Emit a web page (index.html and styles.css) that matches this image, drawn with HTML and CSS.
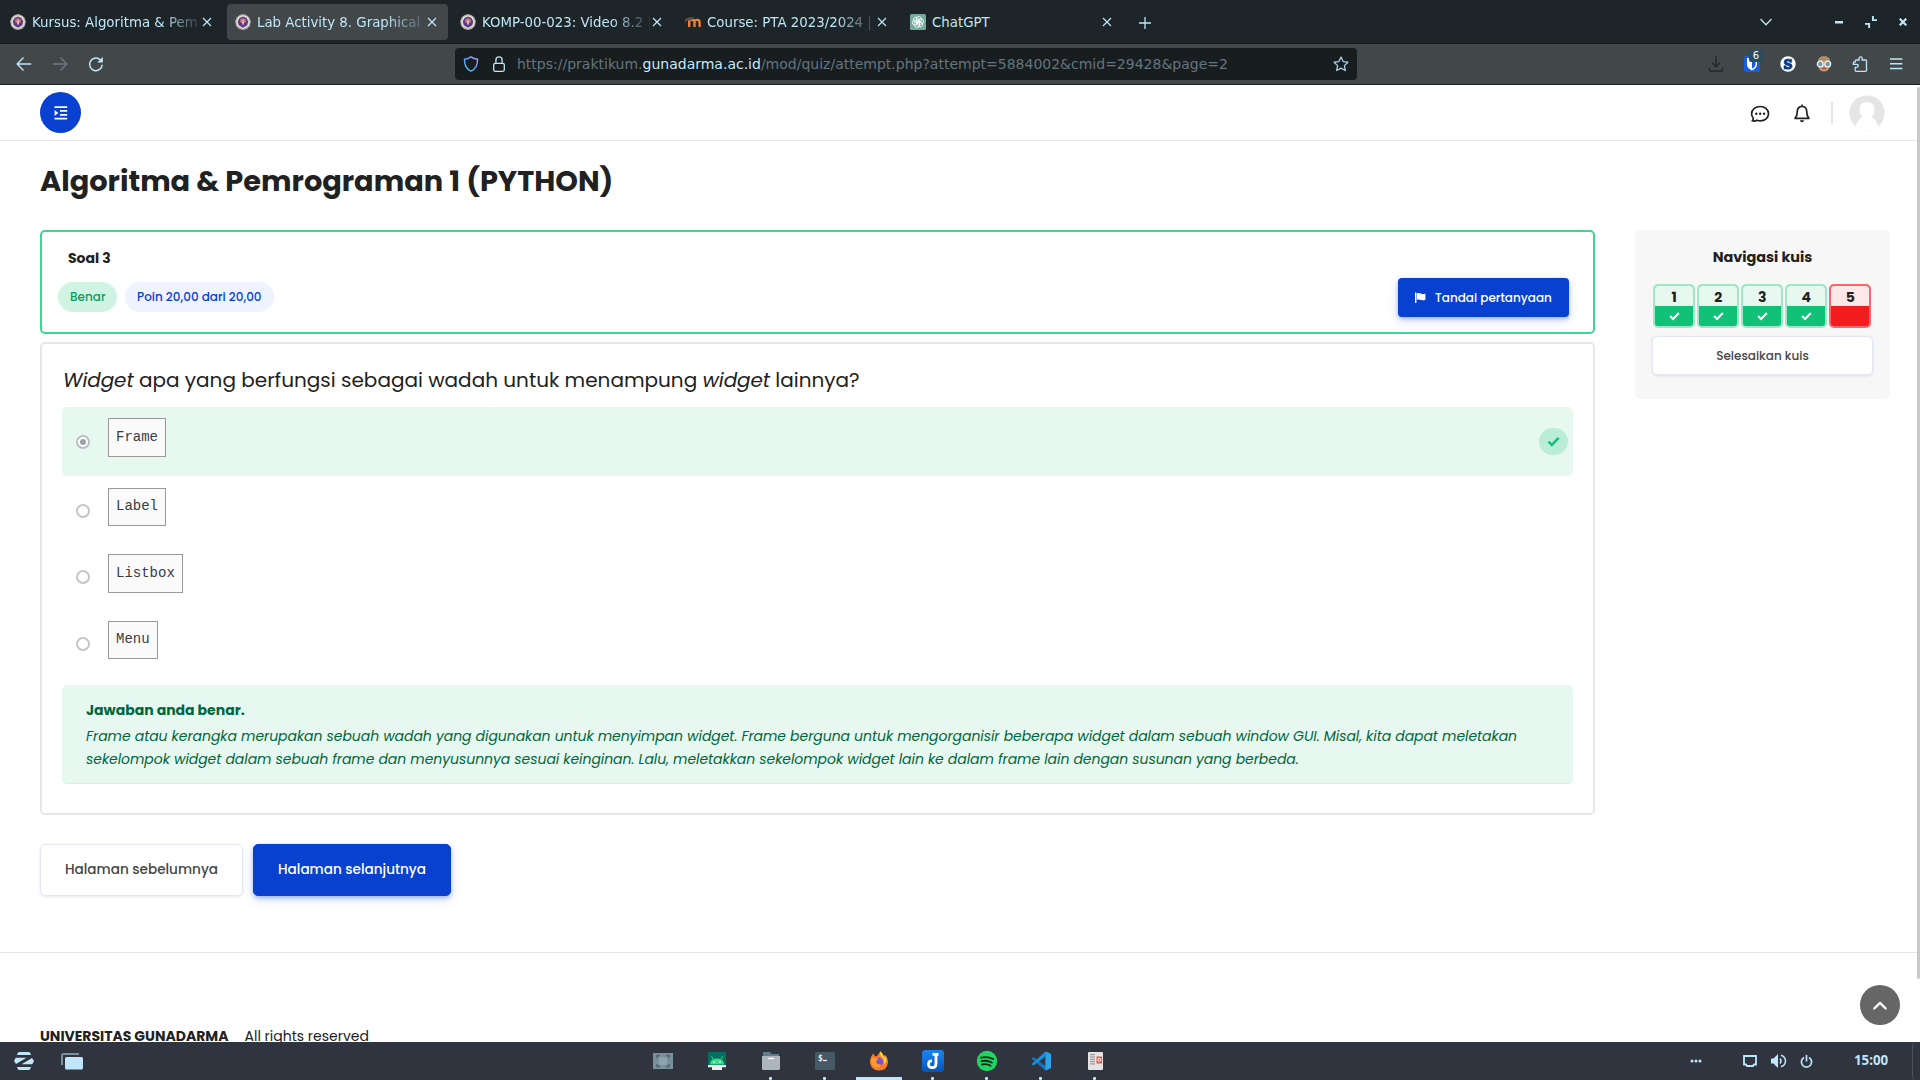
FILE: index.html
```html
<!DOCTYPE html>
<html lang="id">
<head>
<meta charset="utf-8">
<title>Lab Activity 8. Graphical User Interface</title>
<link rel="stylesheet" href="styles.css">
</head>
<body>
<svg width="0" height="0" class="defs">
  <defs>
    <symbol id="crest" viewBox="0 0 16 16">
      <path d="M8 .1l3.400 1 3 2.300 1.400 3.900-.8 4.400-3 3.200L8 16l-4-1.100-3-3.200-.8-4.400 1.400-3.900 3-2.300z" fill="#b5aea8"/>
      <path d="M8 1.200l4.600 1.600 2.200 4.700-1.200 4.600L8 14.900l-5.600-2.800-1.200-4.600 2.200-4.700z" fill="#e4dfd8"/>
      <path d="M8 2.600l3.500 1.300 1.700 3.600-1 3.700L8 13.700l-4.200-2.500-1-3.700 1.700-3.600z" fill="#57398a"/>
      <path d="M8 3.200l1.200 2 1.900-.5-.7 2.200 1.200 1.200-2.500.7L8 11.500 6.900 8.800l-2.500-.7 1.200-1.200-.7-2.200 1.900.5z" fill="#d9776c"/>
      <path d="M7.600 6.500h.9v4h-.9z" fill="#fff"/>
    </symbol>
    <symbol id="x" viewBox="0 0 10 10"><path d="M1 1l8 8M9 1L1 9" stroke="#bfe6f7" stroke-width="1.200" fill="none"/></symbol>
    <symbol id="check" viewBox="0 0 12 10"><path d="M1.300 5.100L4.500 8.200 10.700 1.700" stroke="currentColor" stroke-width="2.300" fill="none"/></symbol>
  </defs>
</svg>

<div class="tabs">
  <div class="tab"><svg class="fav"><use href="#crest"/></svg><span class="label fade">Kursus: Algoritma &amp; Pem</span><svg class="x"><use href="#x"/></svg></div>
  <div class="tab active"><svg class="fav"><use href="#crest"/></svg><span class="label fade">Lab Activity 8. Graphical</span><svg class="x"><use href="#x"/></svg></div>
  <div class="tab"><svg class="fav"><use href="#crest"/></svg><span class="label fade">KOMP-00-023: Video 8.2 |</span><svg class="x"><use href="#x"/></svg></div>
  <div class="tab">
    <svg class="fav" viewBox="0 0 16 16"><path d="M4.200 13V6.500M9.500 13V8q0-2.200 2.500-2.200T14.600 8v5M4.200 8q.2-2.200 2.700-2.200T9.500 8" stroke="#f18233" stroke-width="2.300" fill="none"/><path d="M0 5l5.500-2 4 .8-3 2.400L2 6.400.6 9z" fill="#55514e"/></svg>
    <span class="label fade">Course: PTA 2023/2024 |</span><svg class="x"><use href="#x"/></svg></div>
  <div class="tab">
    <svg class="fav" viewBox="0 0 16 16"><rect width="16" height="16" rx="1.500" fill="#75a99c"/><g fill="none" stroke="#fff" stroke-width=".8"><rect x="6.500" y="2.500" width="4.800" height="6.500" rx="2.300"/><rect x="6.500" y="2.500" width="4.800" height="6.500" rx="2.300" transform="rotate(60 8 8)"/><rect x="6.500" y="2.500" width="4.800" height="6.500" rx="2.300" transform="rotate(120 8 8)"/><rect x="6.500" y="2.500" width="4.800" height="6.500" rx="2.300" transform="rotate(180 8 8)"/><rect x="6.500" y="2.500" width="4.800" height="6.500" rx="2.300" transform="rotate(240 8 8)"/><rect x="6.500" y="2.500" width="4.800" height="6.500" rx="2.300" transform="rotate(300 8 8)"/></g></svg>
    <span class="label">ChatGPT</span><svg class="x"><use href="#x"/></svg></div>
  <svg class="plus" viewBox="0 0 12 12"><path d="M6 0v12M0 6h12" stroke="#bfe6f7" stroke-width="1.300"/></svg>
  <div class="wm">
    <svg width="12" height="8" viewBox="0 0 12 8"><path d="M.5 1L6 6.800 11.500 1" stroke="#bfe6f7" stroke-width="1.300" fill="none"/></svg>
    <svg class="min" width="8" height="3"><path d="M0 0h8v2.500H0z" fill="#bfe6f7"/></svg>
    <svg class="restore" width="12" height="12" viewBox="0 0 12 12"><path d="M7.900 0v4.100H12M0 7.900h4.100V12" stroke="#bfe6f7" stroke-width="1.900" fill="none"/></svg>
    <svg class="close" width="8" height="8" viewBox="0 0 8 8"><path d="M.7.700l6.600 6.600M7.300.7L.7 7.300" stroke="#bfe6f7" stroke-width="2.200"/></svg>
  </div>
</div>

<div class="toolbar">
  <div class="navbtns">
    <svg viewBox="0 0 16 16"><path d="M15.300 8H1.300M7.500 1.600L1.200 8l6.300 6.400" stroke="#bfe6f7" stroke-width="1.400" fill="none"/></svg>
    <svg viewBox="0 0 16 16"><path d="M.7 8h14M8.500 1.600L14.800 8l-6.300 6.400" stroke="#6d7a81" stroke-width="1.400" fill="none"/></svg>
    <svg viewBox="0 0 16 16"><path d="M14.200 8.700A6.300 6.300 0 1 1 11.700 3.300l2 2" stroke="#bfe6f7" stroke-width="1.500" fill="none"/><path d="M14.900.8v5.700H9.200z" fill="#bfe6f7"/></svg>
  </div>
  <div class="url">
    <svg class="shield" viewBox="0 0 16 16"><defs><linearGradient id="sg" x1="1" y1="0" x2="0" y2="1"><stop offset="0" stop-color="#b79bff"/><stop offset=".5" stop-color="#5b9bff"/><stop offset="1" stop-color="#2fe0e8"/></linearGradient></defs><path d="M8 .9C10 2.300 12 3 14.500 3.200c.3 5.300-1.600 9.600-6.500 12C3.100 12.800 1.200 8.500 1.500 3.200 4 3 6 2.300 8 .9z" fill="none" stroke="url(#sg)" stroke-width="1.400"/></svg>
    <svg class="lock" viewBox="0 0 14 16"><rect x="1.700" y="7.300" width="10.600" height="8" rx="1.500" fill="none" stroke="#bfe6f7" stroke-width="1.300"/><path d="M3.900 7V4a3.100 3.100 0 0 1 6.200 0v3" fill="none" stroke="#bfe6f7" stroke-width="1.300"/></svg>
    <span class="addr">https://praktikum.<b>gunadarma.ac.id</b>/mod/quiz/attempt.php?attempt=5884002&amp;cmid=29428&amp;page=2</span>
    <svg class="star" viewBox="0 0 16 16"><path d="M8 1.100l2.100 4.500 4.800.6-3.500 3.400.9 4.900L8 12.100l-4.300 2.400.9-4.900L1.100 6.200l4.800-.6z" fill="none" stroke="#a6d1e6" stroke-width="1.300" stroke-linejoin="round"/></svg>
  </div>
  <div class="ext">
    <svg viewBox="0 0 16 16"><path d="M8 0v10.500M3.800 6.500L8 10.700l4.200-4.200M1.500 11.500v2.700q0 .8.800.8h11.400q.8 0 .8-.8v-2.700" fill="none" stroke="#24292c" stroke-width="1.400"/></svg>
    <span class="bw"><svg viewBox="0 0 16 16"><rect width="16" height="16" rx="1.800" fill="#175ddc"/><path d="M3 2h10v6.500q0 3.500-5 6-5-2.500-5-6z" fill="#fff"/><path d="M8 3.500h3.600v5q0 2.200-3.600 4.200z" fill="#175ddc"/></svg><i>6</i></span>
    <svg viewBox="0 0 16 16"><circle cx="8" cy="8" r="7.700" fill="#fff"/><path d="M11.700 3.700v2.600H9.800Q9.500 4.900 8 4.900q-1.300 0-1.300 1 0 .8 1.800 1.100 3.700.6 3.700 3.100 0 3.100-4.200 3.100-1.300 0-2.200-.5v.3H4V9.800h1.900q.4 1.800 2.200 1.800 1.400 0 1.400-1 0-.8-1.900-1.200-3.500-.6-3.500-3.200Q4.100 3 7.700 3q1.100 0 2.100.5v-.3h1.900z" fill="#0a3a8c" stroke="#0a3a8c" stroke-width=".6"/></svg>
    <svg viewBox="0 0 16 16"><path d="M2 6q0-5.500 6-5.500T14 6v4q-1 5.500-6 5.500T2 10z" fill="#c98d6b"/><path d="M1.800 6Q2 .3 8 .3T14.200 6Q11 3.500 8 3.500T1.800 6z" fill="#a98f6b"/><circle cx="4.300" cy="8" r="2.900" fill="#6d9aa8" stroke="#e8eff0" stroke-width="1.400"/><circle cx="11.700" cy="8" r="2.900" fill="#6d9aa8" stroke="#e8eff0" stroke-width="1.400"/><path d="M6 12.700q2-1.200 4 0" stroke="#8d4c3b" fill="none"/></svg>
    <svg viewBox="0 0 16 16"><path d="M7 4V2.600q0-1.700 1.600-1.700t1.600 1.700V4h3.300q1 0 1 1v9.300q0 1-1 1H4.200q-1 0-1-1v-3h1.600q1.500 0 1.500-1.500T4.800 8.300H1.300V7.200Q1.300 6 2.600 6h.6V5q0-1 1-1z" fill="none" stroke="#bfe6f7" stroke-width="1.300"/></svg>
    <svg viewBox="0 0 16 16"><path d="M2 3h12.400M2 7.700h12.400M2 12.500h12.400" stroke="#bfe6f7" stroke-width="1.400"/></svg>
  </div>
</div>

<div class="page">
  <header class="top">
    <div class="menu"><svg width="14" height="14" viewBox="0 0 14 14"><path d="M.5 1.100h12.700M6 4.900h7.200M6 8.800h7.200M.5 12.600h12.700" stroke="#fff" stroke-width="1.700"/><path d="M.6 3.900v6L4.300 6.900z" fill="#fff"/></svg></div>
    <div class="user">
      <svg class="msg" width="20" height="18" viewBox="0 0 20 18"><path d="M2.200 15.800c.9-.8 1.200-1.700 1.100-2.800C2.200 11.900 1.600 10.400 1.600 8.700 1.600 4.600 5.300 1.500 10.200 1.500s8.300 3.100 8.300 7.200-3.500 7.100-8.300 7.100c-1.200 0-2.300-.2-3.200-.6-1.500.9-3 1.200-4.800.6z" fill="none" stroke="#212121" stroke-width="1.700" stroke-linejoin="round"/><g fill="#212121"><circle cx="6.300" cy="8.700" r="1.200"/><circle cx="10.200" cy="8.700" r="1.200"/><circle cx="14.100" cy="8.700" r="1.200"/></g></svg>
      <svg class="bell" width="16" height="19" viewBox="0 0 16 19"><path d="M8 2.500c-3 0-4.700 2.200-4.700 5 0 3.700-.8 5.200-2.200 6.800h13.800c-1.400-1.600-2.200-3.100-2.200-6.800 0-2.800-1.700-5-4.700-5z" fill="none" stroke="#212121" stroke-width="1.700" stroke-linejoin="round"/><path d="M7.200.5h1.600v2H7.200zM5.800 16.300h4.400q-.4 1.900-2.200 1.900t-2.200-1.900z" fill="#212121"/></svg>
      <span class="sep"></span>
      <svg class="avatar" width="36" height="36" viewBox="0 0 36 36"><defs><clipPath id="av"><circle cx="18" cy="18" r="17.600"/></clipPath></defs><g clip-path="url(#av)"><path d="M0 0h36v36H0z" fill="#e5e5e5"/><path d="M5 36C7 28.500 9.500 24 13.500 22q-3-3-3-7.500Q10.500 7 18 7t7.500 7.500q0 4.500-3 7.500c4 2 6.500 6.500 8.500 14z" fill="#fff"/></g></svg>
    </div>
  </header>

  <h1>Algoritma &amp; Pemrograman 1 (PYTHON)</h1>

  <div class="cols">
    <main>
      <section class="info">
        <h2>Soal 3</h2>
        <div class="inforow">
          <span class="pill ok">Benar</span><span class="pill pts">Poin 20,00 dari 20,00</span>
          <span class="flagbtn"><svg width="11" height="11" viewBox="0 0 11 11"><path d="M0 .4h1.400V11H0z" fill="#fff"/><path d="M1.800 1.300Q4 .5 5.900 1.500T10.400 1.500V7.800Q8 8.800 6 7.900T1.800 7.800z" fill="#fff"/></svg><span>Tandai pertanyaan</span></span>
        </div>
      </section>

      <section class="question">
        <p class="qtext"><em>Widget</em> apa yang berfungsi sebagai wadah untuk menampung <em>widget</em> lainnya?</p>
        <div class="ans correct"><span class="radio on"></span><code>Frame</code><span class="tick"><svg width="13" height="11"><use href="#check"/></svg></span></div>
        <div class="ans"><span class="radio"></span><code>Label</code></div>
        <div class="ans mid"><span class="radio"></span><code>Listbox</code></div>
        <div class="ans"><span class="radio"></span><code>Menu</code></div>
        <div class="feedback">
          <strong>Jawaban anda benar.</strong>
          <p>Frame atau kerangka merupakan sebuah wadah yang digunakan untuk menyimpan widget. Frame berguna untuk mengorganisir beberapa widget dalam sebuah window GUI. Misal, kita dapat meletakan sekelompok widget dalam sebuah frame dan menyusunnya sesuai keinginan. Lalu, meletakkan sekelompok widget lain ke dalam frame lain dengan susunan yang berbeda.</p>
        </div>
      </section>
      <div class="pager"><span class="btn prev">Halaman sebelumnya</span><span class="btn next">Halaman selanjutnya</span></div>
    </main>
    <aside>
      <h3>Navigasi kuis</h3>
      <div class="grid">
        <div class="q"><b>1</b><span><svg width="11" height="10"><use href="#check"/></svg></span></div>
        <div class="q"><b>2</b><span><svg width="11" height="10"><use href="#check"/></svg></span></div>
        <div class="q"><b>3</b><span><svg width="11" height="10"><use href="#check"/></svg></span></div>
        <div class="q"><b>4</b><span><svg width="11" height="10"><use href="#check"/></svg></span></div>
        <div class="q bad"><b>5</b><span></span></div>
      </div>
      <div class="finish">Selesaikan kuis</div>
    </aside>
  </div>
  <footer><b>UNIVERSITAS GUNADARMA</b><span>All rights reserved</span></footer>
  <div class="scroll"></div>
  <div class="totop"><svg width="14" height="9" viewBox="0 0 14 9"><path d="M1.300 7.500L7 1.900l5.700 5.600" stroke="#fff" stroke-width="2.300" fill="none" stroke-linecap="round" stroke-linejoin="round"/></svg></div>
</div>

<div class="taskbar">
  <div class="left">
    <svg width="20" height="18" viewBox="0 0 20 18" fill="#bfe6fb"><path d="M4.500 0h11l1.700 3H2.800zM2.800 15h14.400l-1.700 3h-11zM1.700 5.800h10.800L2 11.900 0 9zM18 6.100L20 9l-1.700 3.200H7.500z"/></svg>
    <svg width="22" height="17" viewBox="0 0 22 17"><path d="M1 12V2.500Q1 1 2.500 1H18" fill="none" stroke="#77919f" stroke-width="2"/><rect x="4" y="4" width="18" height="12.500" rx="1.500" fill="#bfe6fb"/></svg>
  </div>
  <div class="apps">
    <div class="app"><svg viewBox="0 0 22 22"><rect x="1" y="3" width="20" height="16" fill="#78909c"/><path d="M5 8V5.500h3M14 5.500h3V8M17 14v2.500h-3M8 16.500H5V14" stroke="#4f6570" stroke-width="1.500" fill="none"/><rect x="7" y="7" width="8" height="8" rx="2" fill="#8ea3ae"/></svg></div>
    <div class="app"><svg viewBox="0 0 22 22"><path d="M2 2h18v13H2z" fill="#056f62"/><path d="M4 14.500q0-6 7-6t7 6z" fill="#3ddc84"/><path d="M7 9L5.500 6.500M15 9l1.500-2.500" stroke="#3ddc84"/><circle cx="8" cy="12" r=".8" fill="#fff"/><circle cx="14" cy="12" r=".8" fill="#fff"/><path d="M2 15h18v2.300h-4V20H6v-2.700H2z" fill="#eee"/></svg></div>
    <div class="app run"><svg viewBox="0 0 22 22"><path d="M3 2h7l1.500 2H19v5H3z" fill="#607d8b"/><path d="M2 6h18v12.500q0 1.500-1.500 1.500h-15Q2 20 2 18.500z" fill="#adb6bb"/><path d="M8 8.500h6" stroke="#fff" stroke-width="1.300"/></svg></div>
    <div class="app run"><svg viewBox="0 0 22 22"><rect x="1" y="2" width="20" height="18" rx="1" fill="#455a64"/><text x="4" y="11" class="term">$</text><path d="M9 10.500h4" stroke="#e6ecef" stroke-width="1.300"/></svg></div>
    <div class="app act"><svg viewBox="0 0 22 22"><path d="M2 12Q2 7 5.500 3.500L7 6.500 9 6Q11 4 12 1.500 14.500 3.500 15 6l2-1q3 3 3 7.500Q19 20.500 11 20.500T2 12z" fill="#ff7a2a"/><path d="M12.500 1Q11 5 14 7.500T16 14q3.500-2 2-8-1 1-1.500 2Q15 3.500 12.500 1z" fill="#ffd43c"/><circle cx="11" cy="12" r="4.200" fill="#8054c8"/><path d="M4 8q4-1 6.500 1.300L8 11q.5 4 5.500 3.500-3 4.500-7.500 2T4 8z" fill="#ff9a2e"/></svg></div>
    <div class="app run"><svg viewBox="0 0 22 22"><defs><linearGradient id="jg" x1="0" y1="0" x2="0" y2="1"><stop offset="0" stop-color="#1b85f5"/><stop offset="1" stop-color="#0654b8"/></linearGradient></defs><rect width="22" height="22" rx="3.500" fill="url(#jg)"/><path d="M10.500 4.300h6M14 4.300v9.200q0 4.200-3.800 4.200T6.500 14.200t3.400-3.400" fill="none" stroke="#fff" stroke-width="2.800"/></svg></div>
    <div class="app run"><svg viewBox="0 0 22 22"><circle cx="11" cy="11" r="10.200" fill="#1fd45f"/><path d="M5 7.700q6.500-1.700 12.200 1.300M5.500 11.200q5.500-1.300 10.300 1.300M6 14.500q4.700-1 8.600 1.200" fill="none" stroke="#15241b" stroke-width="1.800" stroke-linecap="round"/></svg></div>
    <div class="app run"><svg viewBox="0 0 22 22"><path d="M15.500 1.500L21 4v14l-5.500 2.500L1.500 8.500 3.500 7 15.500 16z" fill="#1178bd"/><path d="M15.500 1.500L21 4v14l-5.500 2.500z" fill="#2ba3ea"/><path d="M15.500 6.500L3.500 15.500 1.500 14 15.500 1.500z" fill="#1c8fd6"/></svg></div>
    <div class="app run"><svg viewBox="0 0 22 22"><rect x="4" y="2" width="15" height="18" rx="1" fill="#e4e4e4"/><path d="M6 4.700h5M6 7h5M6 9.300h5M6 11.600h5M6 13.900h5" stroke="#8a8a8a"/><path d="M12.500 6.500H18v7h-5.500z" fill="#f05545"/><path d="M14 8.500h2.500v2.500H14z" fill="none" stroke="#fff" stroke-width=".8"/></svg></div>
  </div>
  <div class="tray">
    <svg class="dots" width="12" height="4"><g fill="#bfe6fb"><circle cx="2" cy="2" r="1.500"/><circle cx="6" cy="2" r="1.500"/><circle cx="10" cy="2" r="1.500"/></g></svg>
    <svg class="mon" width="14" height="12" viewBox="0 0 14 12"><path d="M1 1h12v8.500h-2l-1 1.500H4L3 9.500H1z" fill="none" stroke="#bfe6fb" stroke-width="1.800"/></svg>
    <svg class="vol" width="16" height="14" viewBox="0 0 16 14"><path d="M0 4.500h2.500L7 0v14L2.500 9.500H0z" fill="#bfe6fb"/><path d="M9 4.500q2 2.500 0 5M10 1.200q4.500 1.500 4.500 5.800T10 12.800" fill="none" stroke="#bfe6fb" stroke-width="1.500"/></svg>
    <svg class="pow" width="13" height="13" viewBox="0 0 13 13"><path d="M4 2.500a5.100 5.100 0 1 0 5 0M6.500 0v6.500" fill="none" stroke="#bfe6fb" stroke-width="1.700"/></svg>
    <span class="clock">15:00</span>
    <span class="edge"></span>
  </div>
</div>
</body>
</html>
```
FILE: styles.css
```css
* { box-sizing: border-box; }
body { margin: 0; width: 1920px; height: 1080px; overflow: hidden; display: flex; flex-direction: column; background: #fff; color: #212121; font-family: Poppins, Inter, sans-serif; }
h1, h2, h3, p { margin: 0; }
svg { display: block; flex: none; }
.defs { position: absolute; }

/* Browser tabs */
.tabs { flex: none; height: 44px; padding: 4px 0 0 2px; background: #1e2528; border-bottom: 1px solid #14191b; display: flex; align-items: flex-start; font: 13.33px "DejaVu Sans", sans-serif; color: #bfe6f7; }
.tab { width: 221px; height: 36px; margin-right: 4px; padding: 0 11px 0 8px; display: flex; align-items: center; border-radius: 4px; }
.tab.active { background: #42474a; }
.fav { width: 16px; height: 16px; margin-right: 6px; }
.label { width: 168px; white-space: nowrap; line-height: 20px; padding-top: 1px; }
.fade { -webkit-mask-image: linear-gradient(to right, #000 128px, transparent 172px); mask-image: linear-gradient(to right, #000 128px, transparent 172px); }
.x { width: 10px; height: 10px; margin-left: auto; }
.plus { width: 12px; height: 12px; margin: 13px 0 0 12px; }
.wm { margin: 0 13px 0 auto; height: 36px; display: flex; align-items: center; }
.min { margin-left: 63px; }
.restore { margin-left: 22px; }
.close { margin-left: 22px; }

/* Browser toolbar */
.toolbar { flex: none; height: 41px; background: #42474a; border-bottom: 1px solid #1b2023; display: flex; align-items: center; }
.navbtns { width: 455px; padding-left: 16px; display: flex; gap: 20px; }
.navbtns svg { width: 16px; height: 16px; }
.url { width: 902px; height: 32px; background: #181d20; border-radius: 4px; display: flex; align-items: center; padding: 0 8px; }
.shield, .star { width: 16px; height: 16px; }
.lock { width: 14px; height: 16px; margin: 0 11px 0 13px; }
.addr { font: 14px "DejaVu Sans", sans-serif; color: #64757d; white-space: nowrap; }
.addr b { font-weight: 400; color: #c5e9f9; }
.star { margin-left: auto; }
.ext { margin-left: auto; padding-right: 16px; display: flex; gap: 20px; }
.ext svg { width: 16px; height: 16px; }
.bw { position: relative; }
.bw i { position: absolute; left: 5px; top: -6px; width: 14px; height: 12px; border-radius: 2px; background: #2a4c5d; color: #fff; font: 10px/12px "DejaVu Sans", sans-serif; text-align: center; }

/* Page */
.page { position: relative; height: 957px; overflow: hidden; }
.top { height: 56px; padding: 0 35px 0 40px; display: flex; align-items: center; justify-content: space-between; border-bottom: 1px solid #e6e6e6; }
.menu { width: 41px; height: 41px; border-radius: 50%; background: #0841cf; display: grid; place-items: center; }
.user { display: flex; align-items: center; }
.msg { margin-top: 2px; }
.bell { margin: 2px 0 0 24px; }
.sep { width: 2px; height: 22px; margin: 0 16px 0 21px; background: #e6e6e6; }
h1 { padding: 21px 0 0 40px; height: 89px; font-size: 28.8px; font-weight: 700; line-height: 38px; white-space: nowrap; }
.cols { display: flex; gap: 40px; padding-left: 40px; align-items: flex-start; height: 722px; }
main { width: 1555px; }
.info { height: 104px; border: 2px solid #3fd595; border-radius: 5px; padding: 17px 24px 0 16px; }
h2 { margin-left: 10px; font-size: 14px; font-weight: 700; line-height: 18px; }
.inforow { display: flex; align-items: flex-start; margin-top: 11px; }
.pill { margin-top: 4px; height: 30px; border-radius: 15px; padding: 0 12px; font-size: 12px; font-weight: 500; line-height: 30px; white-space: nowrap; }
.ok { width: 59px; background: #cff4e4; color: #0f9b5e; }
.pts { width: 149px; margin-left: 8px; background: #eff3ff; color: #0841cf; }
.flagbtn { margin-left: auto; width: 171px; height: 39px; background: #0841cf; color: #fff; border-radius: 4px; display: flex; align-items: center; padding-left: 17px; gap: 9px; font-size: 12px; font-weight: 500; box-shadow: 0 2px 4px #0841cf55, 0 4px 12px #0841cf22; }
.question { height: 473px; margin-top: 8px; border: 2px solid #e7e7e7; border-radius: 5px; padding: 22px 20px 0; }
.qtext { height: 41px; padding-left: 1px; font-size: 20px; line-height: 29px; white-space: nowrap; }
.qtext em { letter-spacing: -.1px; }
.ans { height: 66.500px; padding: 0 5px 0 14px; display: flex; align-items: center; border-radius: 5px; }
.ans.correct { height: 69px; margin-bottom: 2px; background: #e7f8f0; }
.ans.mid { margin: -.6px 0 .6px; }
.radio { width: 14px; height: 14px; border: 2px solid #c5c5cc; border-radius: 50%; background: #fff; }
.radio.on { border-color: #b9bfc4; display: grid; place-items: center; }
.radio.on::after { content: ""; width: 6px; height: 6px; border-radius: 50%; background: #9ba3a7; }
code { height: 38px; margin: -8px 0 0 18px; padding: 0 7px; border: 1px solid #999; background: #fafafa; color: #3b3b44; font: 14px/35px "Liberation Mono", monospace; }
.correct code, .mid code { height: 39px; line-height: 36px; }
.tick { width: 29px; height: 27px; margin-left: auto; border-radius: 14px; background: #b9edd6; color: #12c178; display: grid; place-items: center; }
.feedback { margin-top: 7.500px; height: 99px; padding: 15px 24px 0; border-radius: 5px; border-bottom: 1px solid #cff4e4; background: #e7f8f0; color: #00663c; font-size: 14px; }
.feedback strong { display: block; line-height: 20px; margin-bottom: 5px; }
.feedback p { font-style: italic; line-height: 23px; letter-spacing: -.05px; }
.pager { display: flex; gap: 10px; margin-top: 29px; }
.btn { height: 52px; border-radius: 5px; font-size: 13.600px; font-weight: 500; line-height: 50px; text-align: center; border: 1px solid #e4e8f5; }
.prev { width: 203px; color: #454545; box-shadow: 0 1px 3px #0000001a; }
.next { width: 198px; background: #0841cf; border-color: #0841cf; color: #fff; box-shadow: 0 2px 4px #0841cf55, 0 4px 12px #0841cf22; }
aside { width: 255px; height: 169px; padding: 16px 17px; border-radius: 5px; background: #f7f7f7; }
h3 { font-size: 14.400px; font-weight: 700; line-height: 22px; text-align: center; }
.grid { display: flex; gap: 2px; padding-left: 1px; margin-top: 16px; }
.q { flex: none; width: 42.100px; height: 44px; border: 2px solid #a0e7c8; border-radius: 5px; background: #12c178; overflow: hidden; text-align: center; }
.q b { display: block; height: 20px; background: #e7f8f0; font-size: 14px; line-height: 22px; }
.q span { height: 20px; display: grid; place-items: center; color: #fff; }
.q.bad { border-color: #f8666e; background: #f31c1f; }
.bad b { background: #fde8e9; }
.finish { margin-top: 8px; height: 39px; border: 1px solid #e4e8f5; border-radius: 5px; background: #fff; box-shadow: 0 1px 3px #0000001a; color: #454545; font-size: 12px; font-weight: 500; line-height: 37px; text-align: center; }
footer { border-top: 1px solid #e6e6e6; padding: 72px 0 0 40px; display: flex; gap: 16px; font-size: 14px; line-height: 22px; white-space: nowrap; }
.scroll { position: absolute; right: 0; top: 2px; width: 3px; height: 892px; background: #c9c9c9; border-radius: 2px; }
.totop { position: absolute; left: 1860px; top: 900px; width: 40px; height: 40px; border-radius: 50%; background: #666; display: grid; place-items: center; }

/* Desktop panel */
.taskbar { flex: none; height: 38px; background: #2f343f; display: flex; justify-content: space-between; }
.left { width: 630px; padding-left: 14px; display: flex; align-items: center; gap: 27px; }
.apps { display: flex; gap: 8px; margin-left: 9.500px; }
.app { width: 46px; height: 38px; padding-top: 8px; display: flex; flex-direction: column; align-items: center; justify-content: space-between; }
.app svg { width: 22px; height: 22px; }
.app::after { content: ""; width: 3px; height: 3px; border-radius: 1px; }
.run::after { background: #bfe6fb; }
.act::after { background: #bfe6fb; width: 46px; border-radius: 0; }
.term { font: bold 8px "DejaVu Sans Mono", monospace; fill: #e6ecef; }
.tray { margin-left: auto; display: flex; align-items: center; }
.mon { margin-left: 41px; }
.vol { margin-left: 14px; }
.pow { margin-left: 13px; }
.clock { margin-left: 41px; width: 36px; font: bold 13.33px "Noto Sans", sans-serif; color: #bfe6fb; line-height: 36px; margin-top: -3px; }
.edge { margin-left: 22px; width: 8px; height: 38px; border-left: 1px solid #4a505c; border-radius: 4px 0 0 4px; }
```
